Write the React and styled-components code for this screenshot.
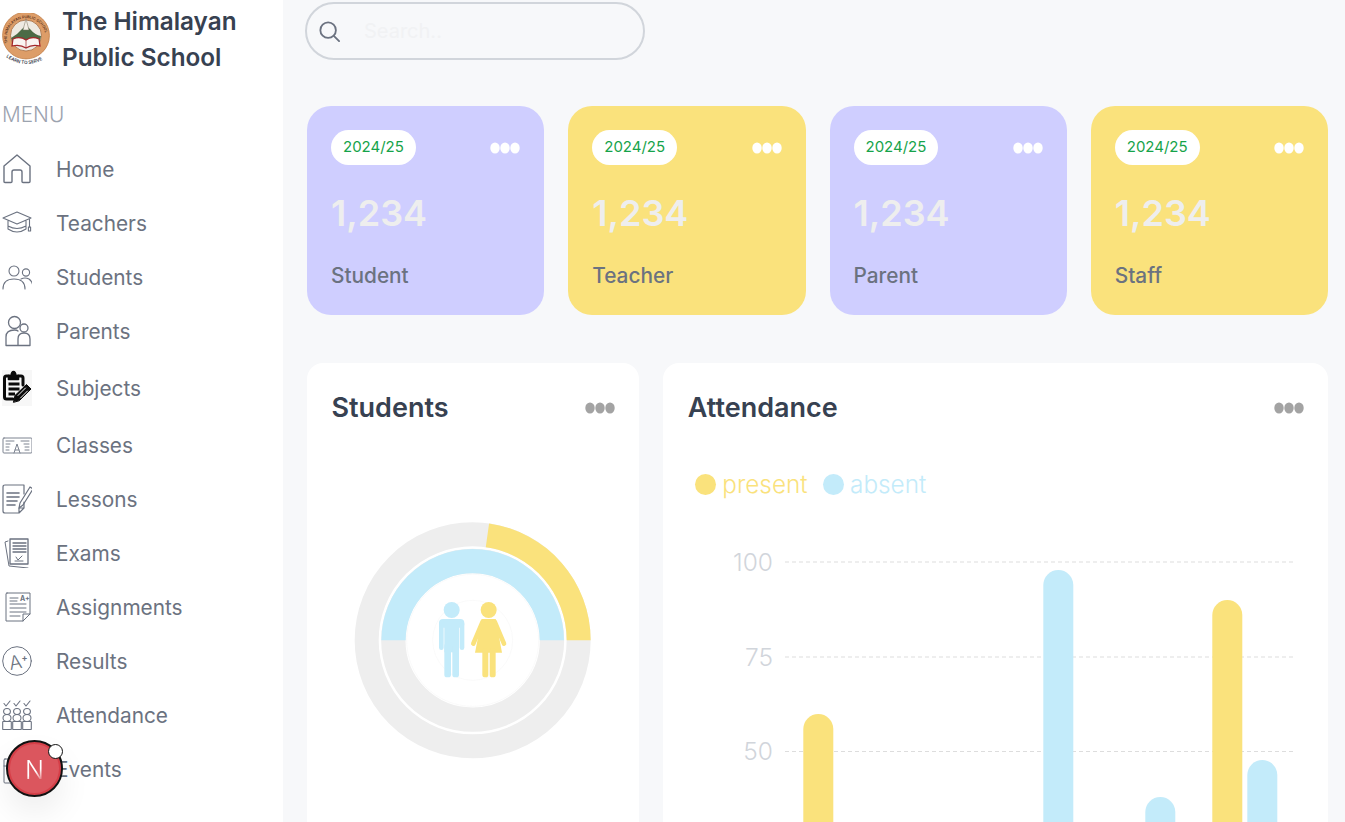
import React from "react";
import styled, { createGlobalStyle } from "styled-components";

const Global = createGlobalStyle`
  html, body { margin: 0; padding: 0; height: 100%; overflow: hidden; background: #fff; }
  * { box-sizing: border-box; }
  body { font-family: Inter, "Liberation Sans", sans-serif; }
`;

const Page = styled.div`
  display: flex;
  height: 822px;
  overflow: hidden;
  position: relative;
`;
const Sidebar = styled.aside`
  width: 283px;
  flex: none;
  background: #fff;
  padding: 3px 0 0 2px;
`;
const Brand = styled.div`
  display: flex;
  gap: 12px;
  align-items: flex-start;
`;
const BrandText = styled.div`
  font-size: 24.3px;
  font-weight: 600;
  line-height: 36px;
  color: #374151;
  width: 200px;
`;
const MenuLabel = styled.div`
  margin-top: 26px;
  font-size: 20.8px;
  line-height: 28px;
  font-weight: 300;
  color: #9ca3af;
`;
const Nav = styled.nav`
  display: flex;
  flex-direction: column;
  margin-top: 13px;
`;
const NavItem = styled.div`
  display: flex;
  align-items: center;
  gap: 24px;
  height: ${(p) => (p.$tall ? 60 : 54)}px;
  font-size: 20.8px;
  color: #6b7280;
`;
const IconBox = styled.svg`
  width: 30px;
  height: ${(p) => p.$h || 30}px;
  flex: none;
  fill: none;
  stroke: #6b7280;
  stroke-width: 1;
  stroke-linecap: round;
  stroke-linejoin: round;
`;
const SubjectsBox = styled(IconBox)`
  background: #f7f7f7;
  stroke: #0b0b0b;
`;
const IconText = styled.text`
  font-family: Inter, sans-serif;
  fill: #6b7280;
  stroke: none;
`;
const Main = styled.main`
  flex: 1;
  min-width: 0;
  background: #f7f8fa;
  padding: 2px 17px 0 24px;
`;
const Search = styled.div`
  display: flex;
  align-items: center;
  gap: 24px;
  width: 340px;
  height: 58px;
  margin-left: -2px;
  padding-left: 12px;
  border: 2px solid #d1d5db;
  border-radius: 29px;
  font-size: 20px;
  color: #f1f2f4;
`;
const CardRow = styled.div`
  display: flex;
  gap: 24px;
  margin-top: 46px;
`;
const StatCard = styled.section`
  flex: 1;
  min-width: 0;
  height: 209px;
  border-radius: 24px;
  padding: 24px;
  background: ${(p) => p.$bg};
`;
const StatTop = styled.div`
  display: flex;
  align-items: center;
  justify-content: space-between;
`;
const Pill = styled.span`
  display: inline-flex;
  align-items: center;
  height: 35px;
  padding: 0 12px 2px;
  background: #fff;
  border-radius: 18px;
  color: #16a34a;
  font-size: 15px;
`;
const StatNumber = styled.div`
  margin-top: 28px;
  font-size: 36px;
  line-height: 40px;
  font-weight: 600;
  color: #eeeeee;
`;
const StatLabel = styled.div`
  margin-top: 29px;
  font-size: 20.8px;
  line-height: 28px;
  font-weight: 500;
  color: #6b7280;
`;
const Panels = styled.div`
  display: grid;
  grid-template-columns: minmax(0, 1fr) minmax(0, 2fr);
  gap: 24px;
  margin-top: 48px;
`;
const Panel = styled.section`
  background: #fff;
  border-radius: 16px;
  height: 520px;
  padding: 28px 24px 0 24.5px;
  overflow: hidden;
`;
const PanelHead = styled.div`
  display: flex;
  align-items: center;
  justify-content: space-between;
  height: 32px;
  & > svg {
    margin-top: 2px;
  }
`;
const PanelTitle = styled.h2`
  margin: 0;
  font-size: 27px;
  font-weight: 600;
  color: #374151;
`;
const Donut = styled.svg`
  display: block;
  width: 265px;
  height: 260px;
  margin: 87px 0 0 8.5px;
`;
const Legend = styled.div`
  display: flex;
  align-items: center;
  gap: 15.5px;
  margin: 44px 0 0 7.5px;
  height: 34px;
  font-size: 24.3px;
  font-weight: 300;
`;
const LegendItem = styled.span`
  display: flex;
  align-items: center;
  gap: 6px;
  color: ${(p) => p.$c};
  &::before {
    content: "";
    width: 21px;
    height: 21px;
    border-radius: 50%;
    background: ${(p) => p.$c};
  }
`;
const Chart = styled.svg`
  display: block;
  width: 640px;
  height: 360px;
  margin: 39px 0 0 -7.2px;
`;
const AxisLabel = styled.text`
  font-family: Inter, sans-serif;
  font-size: 24.5px;
  font-weight: 300;
  fill: #d1d5db;
  text-anchor: end;
`;
const DevBadge = styled.div`
  position: absolute;
  left: 6px;
  top: 740px;
  width: 57px;
  height: 57px;
  border-radius: 50%;
  background: #db565e;
  border: 2px solid #111;
  box-shadow: inset 0 0 0 2px #d63f48, 0 16px 32px rgba(0, 0, 0, 0.07);
  display: flex;
  align-items: center;
  justify-content: center;
`;
const DevLetter = styled.span`
  margin-top: 3px;
  font-size: 25px;
  font-weight: 300;
  line-height: 1;
  background: linear-gradient(150deg, #fff 55%, rgba(255, 255, 255, 0.25) 85%);
  -webkit-background-clip: text;
  background-clip: text;
  color: transparent;
`;
const DevDot = styled.span`
  position: absolute;
  right: -1.5px;
  top: 2px;
  width: 15px;
  height: 15px;
  border-radius: 50%;
  background: #fff;
  border: 1.5px solid #111;
`;
const BrandLogo = styled.svg`
  width: 48px;
  height: 56px;
  flex: none;
  margin-top: 10px;
`;
const LogoText = styled.text`
  font-family: Inter, sans-serif;
  font-weight: 600;
  font-size: ${(p) => p.$size}px;
  fill: ${(p) => p.$c};
`;

const Dots = ({ c }) => (
  <svg width="30" height="12" viewBox="0 0 30 12" fill={c}>
    <ellipse cx="5" cy="6" rx="4.7" ry="5.6" />
    <ellipse cx="15" cy="6" rx="4.7" ry="5.6" />
    <ellipse cx="25" cy="6" rx="4.7" ry="5.6" />
  </svg>
);

const Logo = () => (
  <BrandLogo viewBox="0 0 48 56">
    <defs>
      <path id="ringPath" d="M5.5 30 A19.5 19.5 0 1 1 43 30" />
      <path id="mottoPath" d="M4 44 Q24 58 45 44" />
    </defs>
    <circle cx="24" cy="22.5" r="23.4" fill="#dd9d68" stroke="#c07c45" strokeWidth=".8" />
    <LogoText $size="3.7" $c="#5b3420">
      <textPath href="#ringPath">THE HIMALAYAN PUBLIC SCHOOL</textPath>
    </LogoText>
    <circle cx="24" cy="22.5" r="15.5" fill="#eeeae2" stroke="#a56a3c" strokeWidth=".8" />
    <path d="M9 25 Q11 30 12 31 L36 31 Q38 29 39 23 Q33 22 28 16 Q24 11 20 16 Q15 22 9 25 Z" fill="#4c6b46" />
    <path d="M21 17 L24 6 L27 17 Z" fill="#f4efe6" stroke="#77705f" strokeWidth=".5" />
    <path d="M11 26 Q18 23 24 27 Q30 23 37 26 L38 33 Q30 31 24 35 Q18 31 10 33 Z" fill="#f9f5f2" stroke="#a3272a" strokeWidth="1.2" />
    <path d="M24 27 V35" stroke="#a3272a" strokeWidth=".7" />
    <LogoText $size="4.6" $c="#333a4a">
      <textPath href="#mottoPath">LEARN TO SERVE</textPath>
    </LogoText>
  </BrandLogo>
);

const HomeIcon = () => (
  <IconBox viewBox="0 0 30 30" style={{ strokeWidth: 1.4 }}>
    <path d="M3 28.5 Q2 28.5 2 27.5 V12 L15 1 L28 12 V27.5 Q28 28.5 27 28.5 H21 Q20 28.5 20 27.5 V18 Q20 16 18 16 H12 Q10 16 10 18 V27.5 Q10 28.5 9 28.5 Z" />
  </IconBox>
);
const TeacherIcon = () => (
  <IconBox viewBox="0 0 30 30" style={{ strokeWidth: 1.1 }}>
    <path d="M15 4 L29 10 L15 16 L1 10 Z M6 13 V21 Q15 27 24 21 V13 M6 18 Q15 23 24 18 M27.5 11 V19" />
    <rect x="26.4" y="19" width="2.2" height="4" />
  </IconBox>
);
const StudentsIcon = () => (
  <IconBox viewBox="0 0 30 30" style={{ strokeWidth: 1.1 }}>
    <circle cx="12" cy="9" r="5" />
    <circle cx="24" cy="10.5" r="3.6" />
    <path d="M1 27 Q1 17 12 17 Q23 17 23 27 M19 17 Q23 15 27 17 Q31 20 31 26" />
  </IconBox>
);
const ParentsIcon = () => (
  <IconBox viewBox="0 0 30 32" style={{ strokeWidth: 1.3 }} $h={32}>
    <circle cx="12.5" cy="7.5" r="6" />
    <circle cx="22" cy="13" r="4" />
    <path d="M4 30.5 V22 Q4 15 12.5 15 Q15 15 16 16 M4 30.5 H28 V24 Q28 18 22 18 Q16 18 16 24 V30.5" />
  </IconBox>
);
const SubjectsIcon = () => (
  <SubjectsBox viewBox="0 0 30 36" $h={36}>
    <path d="M7 6 H4.5 Q2.5 6 2.5 8 V27 Q2.5 29 4.5 29 H11" strokeWidth="3" />
    <path d="M16 6 H19 Q21 6 21 8 V15" strokeWidth="3" />
    <path d="M6.5 9.5 V5.5 H9 Q9.5 1.5 11.5 1.5 Q13.5 1.5 14 5.5 H16.5 V9.5 Z" fill="#0b0b0b" strokeWidth="1.6" />
    <path d="M6.5 14 H17.5 M6.5 19 H17.5 M6.5 24 H13" strokeWidth="3" strokeLinecap="butt" />
    <path d="M11.5 32 L13 25.5 L24.5 14.5 L29 19 L17.5 30.5 Z" fill="#0b0b0b" strokeWidth="1" />
    <path d="M16 25.5 L23.5 18 M18.5 28 L25.5 21" stroke="#f7f7f7" strokeWidth="1" />
  </SubjectsBox>
);
const ClassesIcon = () => (
  <IconBox viewBox="0 0 30 30" style={{ stroke: "#7c8390" }}>
    <rect x="1" y="8" width="29" height="15" rx="1" />
    <path d="M4 11 H12 M4 14 H8 M4 17 H7 M4 20 H7 M19 11 H27 M22 14 H27 M23 17 H27 M23 20 H27" />
    <path d="M12 23 L15 14 L18 23 M13 20 H17" />
  </IconBox>
);
const LessonsIcon = () => (
  <IconBox viewBox="0 0 30 30" style={{ strokeWidth: 1.2 }}>
    <path d="M22 10 V1 H3 Q1 1 1 3 V27 Q1 29 3 29 H17 L22 24 V18 M17 29 V24 H22" />
    <path d="M5 9 H17 M5 13 H17 M5 17 H15 M5 21 H13" strokeWidth="1.6" />
    <path d="M17 24 L18 19 L28 3 L31 5 L21 21 Z" />
  </IconBox>
);
const ExamsIcon = () => (
  <IconBox viewBox="0 0 30 30">
    <path d="M6 3 L3 4 L7 28 L26 30" />
    <path d="M8 1 H26 V26 H8 Z" strokeWidth="1.3" />
    <path d="M11 5 H24 M11 8 H24 M11 11 H24 M11 14 H24" strokeWidth="1.3" />
    <path d="M13 23 H21 M14 19 L16 22 L20 18" />
  </IconBox>
);
const AssignIcon = () => (
  <IconBox viewBox="0 0 30 30">
    <path d="M5 1 H28 V22 L21 29 H4 V2 Q4 1 5 1 Z M21 29 V22 H28" />
    <path d="M8 6 H16 M8 9 H15 M8 12 H24 M8 16 H24 M8 20 H24 M8 24 H18" />
    <IconText x="18" y="9" fontSize="7" fontWeight="700">A+</IconText>
  </IconBox>
);
const ResultsIcon = () => (
  <IconBox viewBox="0 0 30 30">
    <circle cx="15" cy="15" r="14.3" />
    <IconText x="7" y="23" fontSize="19" fontWeight="300" transform="rotate(-10 14 16)">A</IconText>
    <IconText x="19.5" y="14.5" fontSize="9" fontWeight="700">+</IconText>
  </IconBox>
);
const AttendIcon = () => (
  <IconBox viewBox="0 0 30 30" style={{ strokeWidth: 1.1 }}>
    {[0, 10, 20].map((x) => (
      <g key={x} transform={`translate(${x} 0)`}>
        <path d="M2 3.5 L4 6 L8 1" />
        <ellipse cx="5" cy="11.5" rx="3.4" ry="3" />
        <ellipse cx="5" cy="18" rx="4" ry="3.5" />
        <rect x=".7" y="21.5" width="8.6" height="8" rx=".5" />
      </g>
    ))}
  </IconBox>
);
const EventsIcon = () => (
  <IconBox viewBox="0 0 30 30">
    <rect x="2" y="5" width="26" height="24" rx="1" />
    <path d="M2 12 H28 M8 2 V8 M22 2 V8" />
  </IconBox>
);

const items = [
  ["Home", HomeIcon],
  ["Teachers", TeacherIcon],
  ["Students", StudentsIcon],
  ["Parents", ParentsIcon],
  ["Subjects", SubjectsIcon, true],
  ["Classes", ClassesIcon],
  ["Lessons", LessonsIcon],
  ["Exams", ExamsIcon],
  ["Assignments", AssignIcon],
  ["Results", ResultsIcon],
  ["Attendance", AttendIcon],
  ["Events", EventsIcon],
];

const stats = [
  ["Student", "#cfceff"],
  ["Teacher", "#fae27c"],
  ["Parent", "#cfceff"],
  ["Staff", "#fae27c"],
];

const Bar = ({ x, top, c }) => (
  <rect x={x - 680.7} y={top - 540} width="30" height={500} rx="15" fill={c} />
);

const polar = (r, deg) => {
  const a = ((deg - 90) * Math.PI) / 180;
  return [398 + r * Math.cos(a), 391 + r * Math.sin(a)];
};
const arc = (r0, r1, a0, a1) => {
  const [x0, y0] = polar(r1, a0);
  const [x1, y1] = polar(r1, a1);
  const [x2, y2] = polar(r0, a1);
  const [x3, y3] = polar(r0, a0);
  const large = a1 - a0 > 180 ? 1 : 0;
  return `M${x0} ${y0} A${r1} ${r1} 0 ${large} 1 ${x1} ${y1} L${x2} ${y2} A${r0} ${r0} 0 ${large} 0 ${x3} ${y3} Z`;
};

export default function App() {
  return (
    <Page>
      <Global />
      <Sidebar>
        <Brand>
          <Logo />
          <BrandText>The Himalayan Public School</BrandText>
        </Brand>
        <MenuLabel>MENU</MenuLabel>
        <Nav>
          {items.map(([label, Icon, tall]) => (
            <NavItem key={label} $tall={tall}>
              <Icon />
              {label}
            </NavItem>
          ))}
        </Nav>
      </Sidebar>
      <Main>
        <Search>
          <svg width="21" height="21" viewBox="0 0 23 23" fill="none" stroke="#6b7280" strokeWidth="2" strokeLinecap="round">
            <circle cx="10" cy="10" r="8.5" />
            <path d="M16.5 16.5 L22 22" />
          </svg>
          Search..
        </Search>
        <CardRow>
          {stats.map(([label, bg]) => (
            <StatCard key={label} $bg={bg}>
              <StatTop>
                <Pill>2024/25</Pill>
                <Dots c="#fff" />
              </StatTop>
              <StatNumber>1,234</StatNumber>
              <StatLabel>{label}</StatLabel>
            </StatCard>
          ))}
        </CardRow>
        <Panels>
          <Panel>
            <PanelHead>
              <PanelTitle>Students</PanelTitle>
              <Dots c="#a3a3a3" />
            </PanelHead>
            <Donut viewBox="0 0 795 780">
              <circle cx="398" cy="391" r="318" fill="none" stroke="#eeeeee" strokeWidth="72" />
              <path d={arc(282, 354, 8, 90)} fill="#fae27c" />
              <circle cx="398" cy="391" r="238" fill="none" stroke="#eeeeee" strokeWidth="73" />
              <path d={arc(201, 274, -90, 90)} fill="#c3ebfa" />
              <circle cx="398" cy="391" r="198" fill="#fff" stroke="#f7f7f7" strokeWidth="2" />
              <circle cx="398" cy="391" r="120" fill="#fff" stroke="#f7f7f7" strokeWidth="2" />
              <g fill="#c3ebfa">
                <circle cx="335" cy="300" r="24" />
                <rect x="297" y="327" width="76" height="26" rx="12" />
                <rect x="297" y="335" width="14" height="85" rx="7" />
                <rect x="359" y="335" width="14" height="85" rx="7" />
                <rect x="313" y="327" width="44" height="100" />
                <rect x="313" y="400" width="20" height="102" rx="8" />
                <rect x="337" y="400" width="20" height="102" rx="8" />
              </g>
              <g fill="#fae27c">
                <circle cx="446" cy="300" r="24" />
                <path d="M425 327 H467 L486 428 H405 Z" />
                <path d="M428 335 L400 401 M464 335 L492 401" stroke="#fae27c" strokeWidth="14" strokeLinecap="round" />
                <rect x="427" y="415" width="18" height="87" rx="8" />
                <rect x="449" y="415" width="18" height="87" rx="8" />
              </g>
            </Donut>
          </Panel>
          <Panel>
            <PanelHead>
              <PanelTitle>Attendance</PanelTitle>
              <Dots c="#a3a3a3" />
            </PanelHead>
            <Legend>
              <LegendItem $c="#fae27c">present</LegendItem>
              <LegendItem $c="#c3ebfa">absent</LegendItem>
            </Legend>
            <Chart viewBox="0 0 640 360">
              {[22, 117, 211.5, 306].map((y) => (
                <line key={y} x1="104" x2="613" y1={y} y2={y} stroke="#ddd" strokeDasharray="4 3" />
              ))}
              <AxisLabel x="92" y="31">100</AxisLabel>
              <AxisLabel x="92" y="126">75</AxisLabel>
              <AxisLabel x="92" y="220">50</AxisLabel>
              <Bar x={803} top={714} c="#fae27c" />
              <Bar x={1043} top={570} c="#c3ebfa" />
              <Bar x={1145} top={797} c="#c3ebfa" />
              <Bar x={1212} top={600} c="#fae27c" />
              <Bar x={1247} top={760} c="#c3ebfa" />
            </Chart>
          </Panel>
        </Panels>
      </Main>
      <DevBadge>
        <DevLetter>N</DevLetter>
        <DevDot />
      </DevBadge>
    </Page>
  );
}
